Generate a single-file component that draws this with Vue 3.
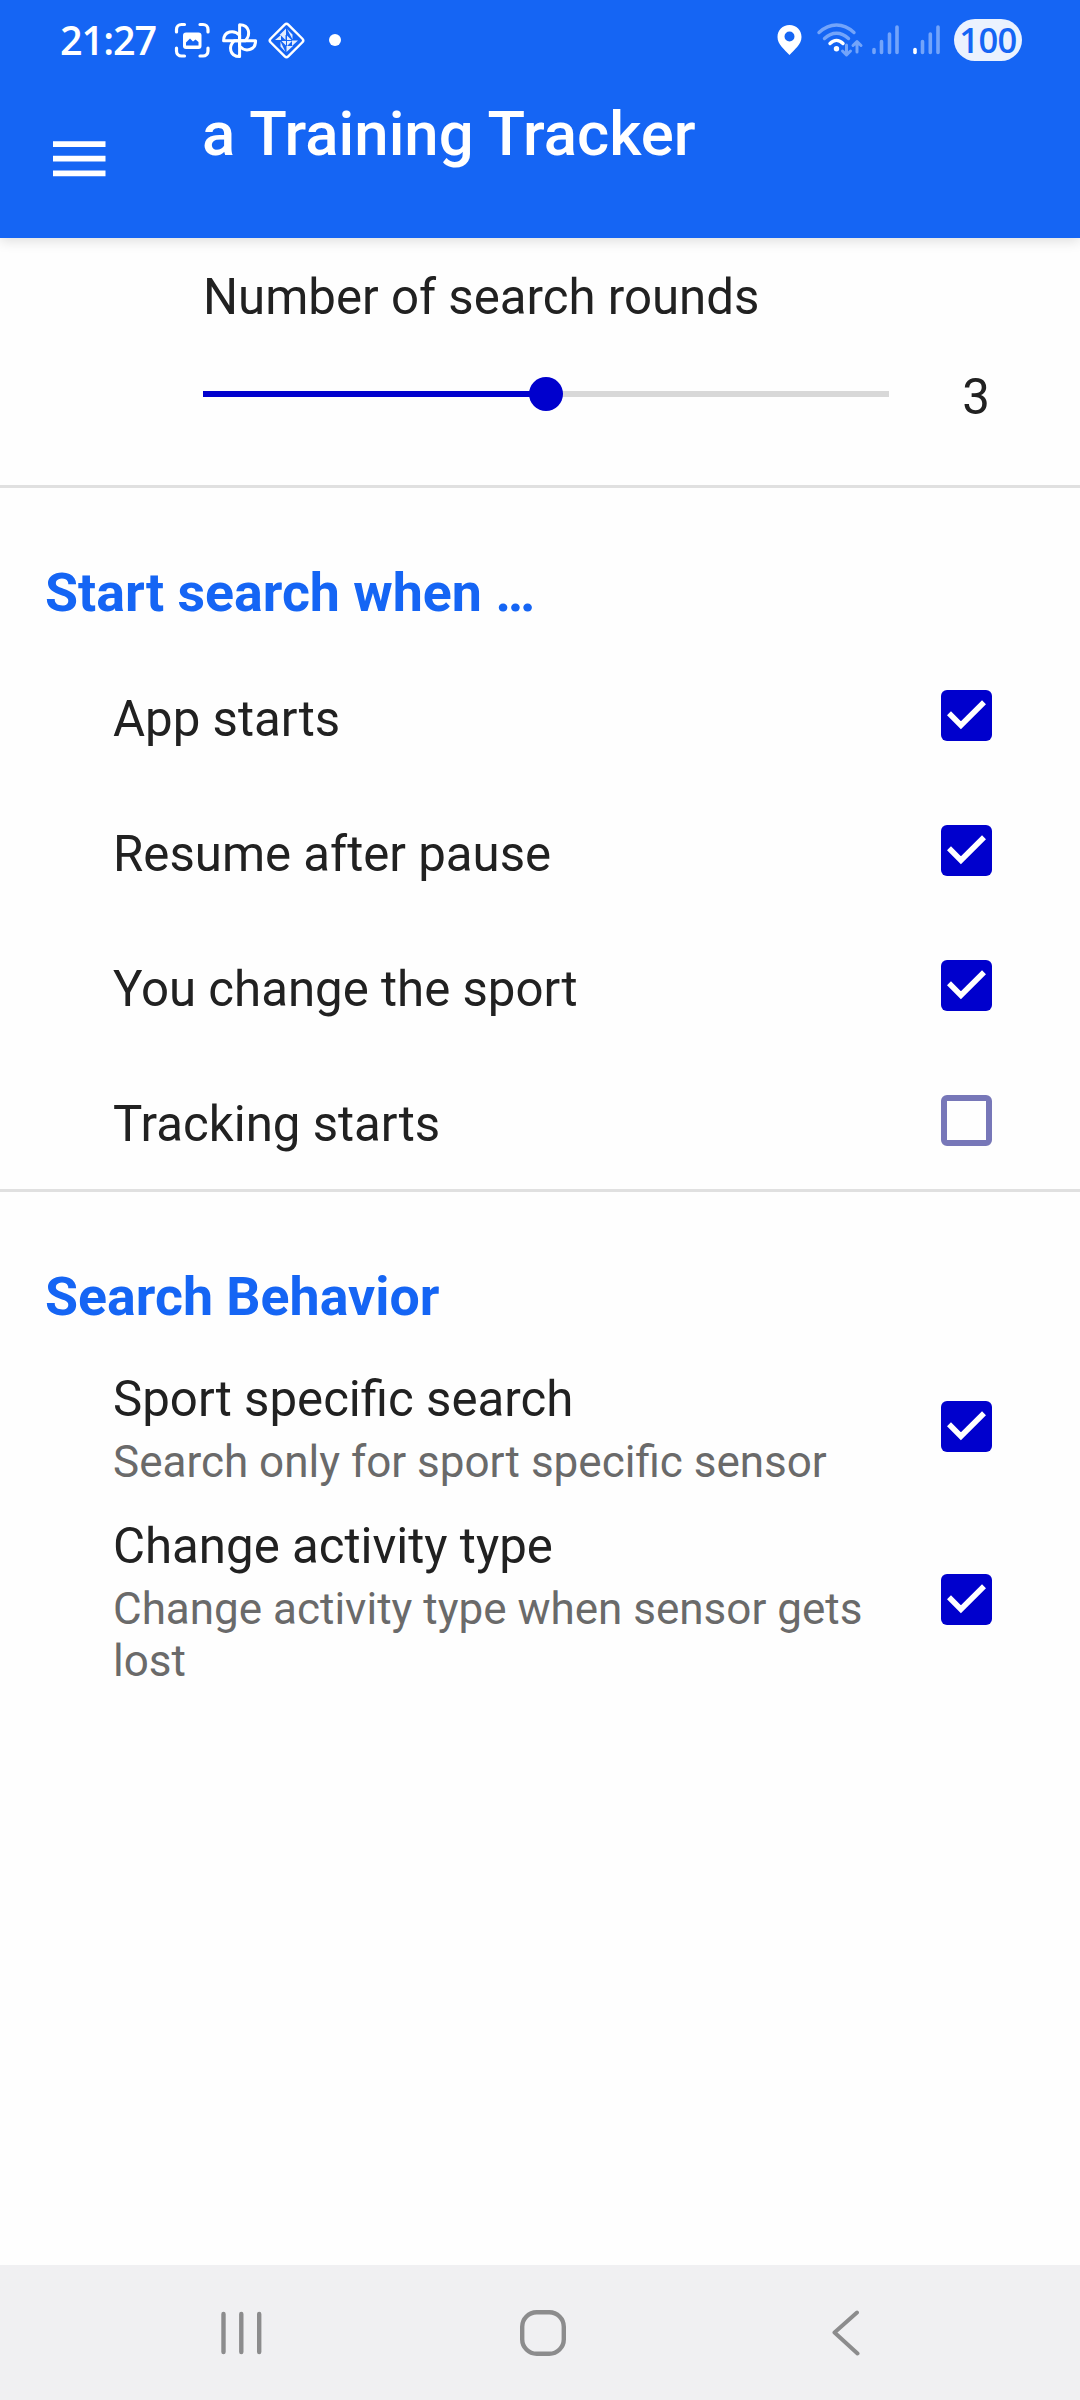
<script setup>
import { ref } from 'vue'

const rounds = ref(3)
const max = 5

const triggers = ref([
  { title: 'App starts', checked: true },
  { title: 'Resume after pause', checked: true },
  { title: 'You change the sport', checked: true },
  { title: 'Tracking starts', checked: false },
])

const behaviors = ref([
  { title: 'Sport specific search', summary: 'Search only for sport specific sensor', checked: true },
  { title: 'Change activity type', summary: 'Change activity type when sensor gets lost', checked: true },
])
</script>

<template>
  <div class="screen">
    <header class="appbar">
      <div class="status">
        <span class="clock">21:27</span>
        <svg class="left-icons" width="170" height="40" viewBox="0 0 170 40" fill="none" stroke="#fff">
          <g stroke-width="3.2" stroke-linecap="round">
            <path d="M2.500 12V9.500a5 5 0 0 1 5-5h3M26 4.500h3a5 5 0 0 1 5 5V12M34 28v3a5 5 0 0 1-5 5h-3M10.500 36h-3a5 5 0 0 1-5-5v-3" />
          </g>
          <rect x="9" y="12.500" width="18.500" height="16.500" rx="3" fill="#fff" stroke="none" />
          <path d="M12 25.500v-3l4-4 3 3 2.500-2 3 2.500v3.500z" fill="#1565f4" stroke="none" />
          <g stroke-width="3" stroke-linejoin="round" transform="translate(.6 .3)">
            <path d="M65 20.500V4.500c10 0 11.500 10.500 5.500 16z" />
            <path d="M65 20.500h16c0 10-10.500 11.500-16 5.500z" />
            <path d="M65 20.500v15.800c-10 0-11.500-10.300-5.500-15.800z" />
            <path d="M65 20.500H49c0-10 10.500-11.500 16-5.500z" />
          </g>
          <rect x="100" y="8" width="25" height="25" rx="2.500" transform="rotate(45 112.500 20.500)" stroke-width="2.400" />
          <g fill="#fff" stroke="none" opacity=".88">
            <path d="M112 8.500v6.500h-6.500zM113 9l5.500 5.500v5zM124 20.500l-6 5.500v-5.500zM101 20l6-5v5zM112.500 32v-6h6.500zM111.500 32l-5-5.500v-5z" />
            <path d="M106.500 15h5v5zM113 15.500l4.500 4.500H113zM113 21h5l-5 5zM107.500 21h4.500v4.500z" />
          </g>
          <circle cx="161" cy="20" r="6" fill="#fff" stroke="none" />
        </svg>
        <svg class="right-icons" width="166" height="40" viewBox="0 0 166 40" fill="none">
          <path fill="#fff" fill-rule="evenodd" d="M12.500 5C5.500 5 .5 10.200.5 17c0 7.500 7 12.500 12 18 5-5.500 12-10.500 12-18 0-6.800-5-12-12-12zm0 6.500a5 5 0 1 1 0 10 5 5 0 0 1 0-10z" />
          <g stroke-width="3.400" stroke-linecap="round">
            <path d="M42 12.500c11-10 24-10 35 0M47.500 18.500c7.500-7 16.500-7 24 0" stroke="#73a4fa" />
            <path d="M53 23.500c4-4 9-4 13 0" stroke="#fff" />
          </g>
          <circle cx="59.500" cy="28.700" r="2.700" fill="#fff" />
          <path d="M69.500 25v9.500M65.500 31l4 4 4-4M80 32V21.500M76 25.500l4-4 4 4" stroke="#73a4fa" stroke-width="3" stroke-linecap="round" stroke-linejoin="round" />
          <g stroke="#73a4fa" stroke-width="3.600" stroke-linecap="round">
            <path d="M97 29.500v3M104.500 21.500v11M112.500 14v18.500M120 7v25.500" />
            <path d="M145.500 21.500v11M153.300 14v18.500M161 7v25.500" />
            <path d="M138 29.500v3" stroke="#fff" />
          </g>
        </svg>
        <span class="battery">100</span>
      </div>
      <div class="toolbar">
        <svg class="menu" width="53" height="36" viewBox="0 0 53 36" fill="#fff">
          <path d="M0 .3h52.500v5.700H0zM0 14.800h52.500v5.700H0zM0 29.500h52.500v5.700H0z" />
        </svg>
        <h1>a Training Tracker</h1>
      </div>
    </header>

    <main>
      <section class="rounds">
        <div class="row-title">Number of search rounds</div>
        <div class="slider-row">
          <div class="slider">
            <div class="fill" :style="{ width: ((rounds - 0.5) / max) * 100 + '%' }"></div>
            <div class="thumb"></div>
            <div class="rest"></div>
          </div>
          <span class="value">{{ rounds }}</span>
        </div>
      </section>

      <section class="group">
        <h2>Start search when …</h2>
        <div v-for="item in triggers" :key="item.title" class="row simple">
          <div class="row-title">{{ item.title }}</div>
          <span class="box" :class="{ checked: item.checked }">
            <svg v-if="item.checked" width="51" height="51" viewBox="0 0 51 51" fill="none" stroke="#fff" stroke-width="5.600">
              <path d="M8 23.300 19.900 35.200 43 12.200" />
            </svg>
          </span>
        </div>
      </section>

      <section class="group">
        <h2>Search Behavior</h2>
        <div v-for="item in behaviors" :key="item.title" class="row">
          <div class="texts">
            <div class="row-title">{{ item.title }}</div>
            <div class="summary">{{ item.summary }}</div>
          </div>
          <span class="box" :class="{ checked: item.checked }">
            <svg v-if="item.checked" width="51" height="51" viewBox="0 0 51 51" fill="none" stroke="#fff" stroke-width="5.600">
              <path d="M8 23.300 19.900 35.200 43 12.200" />
            </svg>
          </span>
        </div>
      </section>
    </main>

    <nav class="navbar">
      <svg width="41" height="46" viewBox="0 0 41 46" fill="none" stroke="#8c8c8d" stroke-width="4.400" stroke-linecap="round">
        <path d="M2.500 4v38M20.300 4v38M38.200 4v38" />
      </svg>
      <svg class="home" width="46" height="46" viewBox="0 0 46 46" fill="none" stroke="#8c8c8d" stroke-width="4.400">
        <rect x="2.200" y="2.200" width="41.600" height="41.600" rx="14.500" />
      </svg>
      <svg class="back" width="28" height="46" viewBox="0 0 28 46" fill="none" stroke="#8c8c8d" stroke-width="4" stroke-linecap="round" stroke-linejoin="round">
        <path d="M25 2.500 2.500 22.500 25.500 43.500" />
      </svg>
    </nav>
  </div>
</template>

<style>
body {
  margin: 0;
  background: #fff;
}
</style>

<style scoped>
.screen {
  width: 1080px;
  height: 2400px;
  display: flex;
  flex-direction: column;
  background: #fefefe;
  font-family: Roboto, sans-serif;
  color: #212121;
  overflow: hidden;
}
.appbar {
  height: 238px;
  flex: none;
  background: #1565f4;
  color: #fff;
  box-shadow: 0 3px 12px rgba(0, 0, 0, 0.13);
}
.status {
  height: 80px;
  display: flex;
  align-items: center;
  padding-left: 60px;
  box-sizing: border-box;
}
.clock {
  width: 114px;
  font: 600 39.5px/40px 'Open Sans', sans-serif;
  letter-spacing: -1px;
}
.left-icons {
  flex: none;
}
.right-icons {
  margin-left: 433px;
  flex: none;
}
.battery {
  margin-left: 11px;
  width: 68px;
  height: 42px;
  border-radius: 21px;
  background: #ebf2fe;
  color: #1565f4;
  font: 600 34.5px/42px 'Open Sans', sans-serif;
  letter-spacing: -0.6px;
  text-align: center;
}
.toolbar {
  display: flex;
  align-items: flex-start;
  padding-left: 53px;
}
.menu {
  margin-top: 61px;
}
h1 {
  margin: 19px 0 0 96px;
  font-size: 61.7px;
  line-height: 70px;
  font-weight: 500;
}
main {
  flex: 1;
}
.row-title {
  font-size: 49.2px;
  line-height: 58px;
}
.rounds {
  height: 247px;
  box-sizing: border-box;
  padding: 30px 0 0 203px;
}
.slider-row {
  display: flex;
  align-items: center;
  height: 56px;
  margin-top: 40px;
}
.slider {
  width: 686px;
  display: flex;
  align-items: center;
}
.fill {
  height: 6px;
  background: #0000cd;
}
.thumb {
  width: 34px;
  height: 34px;
  margin: 0 -17px;
  border-radius: 50%;
  background: #0000cd;
  z-index: 1;
}
.rest {
  flex: 1;
  height: 6px;
  background: #d8d8d8;
}
.value {
  width: 30px;
  margin-left: 72px;
  padding-top: 5px;
  text-align: center;
  font-size: 49.2px;
}
.group {
  border-top: 3px solid #e0e0e0;
}
h2 {
  margin: 0;
  padding: 74px 0 0 45px;
  height: 87px;
  font-size: 53.7px;
  line-height: 62px;
  font-weight: 700;
  color: #1565f4;
}
.row {
  display: flex;
  align-items: center;
  justify-content: space-between;
  box-sizing: border-box;
  padding: 0 87.6px 0 113px;
}
.simple {
  height: 135px;
}
.simple .row-title {
  padding-top: 5px;
}
.simple .box {
  margin-bottom: 2px;
}
.texts {
  width: 765px;
  padding: 17px 0 12px;
}
.summary {
  font-size: 44px;
  line-height: 52px;
  color: #6a6a6a;
  padding-top: 8px;
}
.box {
  width: 51px;
  height: 51px;
  flex: none;
  box-sizing: border-box;
  border: 6px solid #7777b8;
  border-radius: 6px;
}
.box.checked {
  border: 0;
  background: #0000cd;
}
.box svg {
  display: block;
}
.navbar {
  height: 135px;
  flex: none;
  display: flex;
  align-items: center;
  box-sizing: border-box;
  padding-left: 221px;
  background: #f0f0f2;
}
.home {
  margin-left: 258px;
}
.back {
  margin-left: 266px;
}
</style>
